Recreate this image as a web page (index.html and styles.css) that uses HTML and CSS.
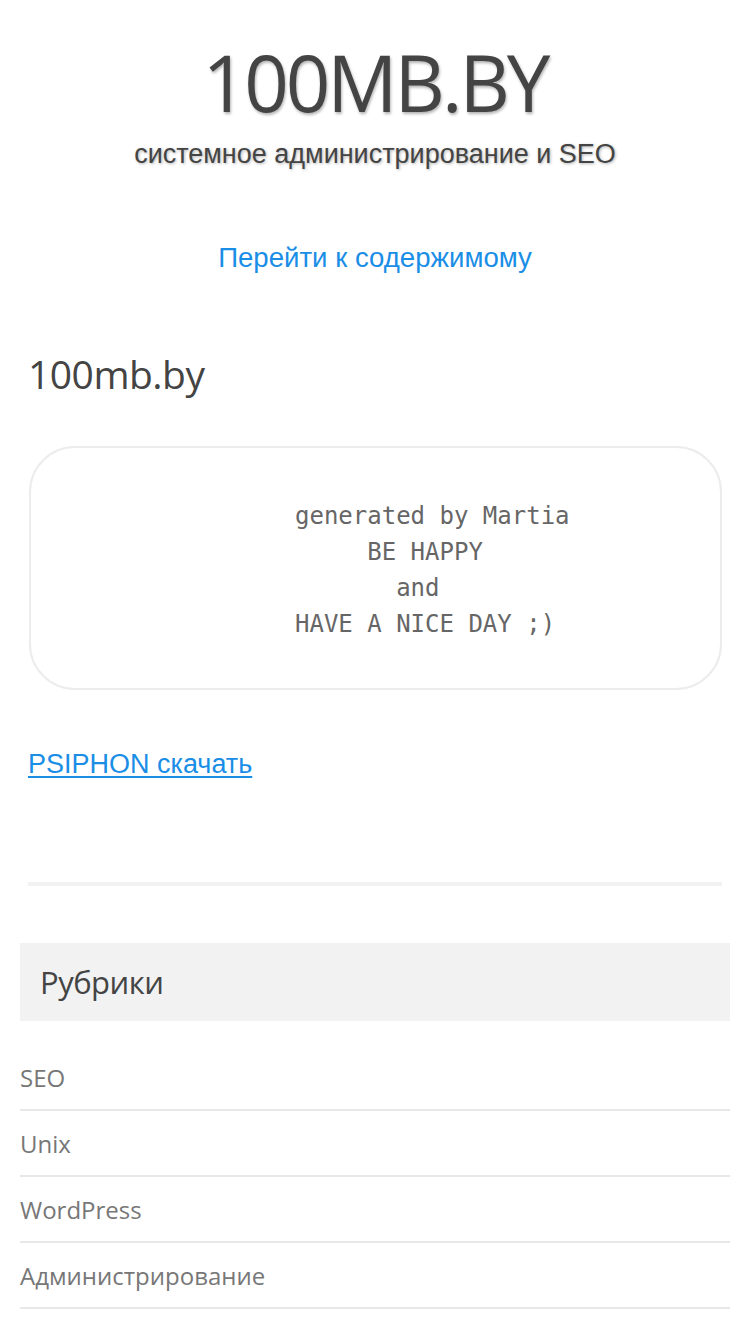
FILE: index.html
```html
<!DOCTYPE html>
<html lang="ru">
<head>
<meta charset="utf-8">
<title>100MB.BY</title>
<link rel="stylesheet" href="styles.css">
</head>
<body>
<header class="site-header">
  <h1 class="site-title">100MB.BY</h1>
  <p class="site-desc">системное администрирование и SEO</p>
  <a class="skip-link" href="#content">Перейти к содержимому</a>
</header>
<main class="content" id="content">
  <h2 class="page-title">100mb.by</h2>
  <div class="code-box"><pre class="code">generated by Martia
     BE HAPPY
       and
HAVE A NICE DAY ;)</pre></div>
  <a class="dl-link" href="#">PSIPHON скачать</a>
  <hr class="sep">
</main>
<aside class="widget">
  <h3 class="widget-title">Рубрики</h3>
  <ul class="cat-list">
    <li>SEO</li>
    <li>Unix</li>
    <li>WordPress</li>
    <li>Администрирование</li>
    <li>Разное</li>
  </ul>
</aside>
</body>
</html>
```
FILE: styles.css
```css
html, body {
  margin: 0;
  padding: 0;
  background: #fff;
}
body {
  font-family: "Liberation Sans", Arial, sans-serif;
  color: #444;
}
.site-header {
  display: flex;
  flex-direction: column;
  align-items: center;
  padding-top: 34px;
}
.site-title {
  margin: 0;
  font-family: "Open Sans", "Noto Sans", sans-serif;
  font-weight: 400;
  font-size: 78px;
  line-height: 96px;
  letter-spacing: -3px;
  color: #444;
  text-shadow: 1px 2px 3px rgba(0,0,0,0.3);
}
.site-desc {
  margin: 6px 0 0;
  font-size: 27px;
  line-height: 36px;
  color: #444;
  text-shadow: 1px 1px 3px rgba(0,0,0,0.3);
}
.skip-link {
  margin-top: 68px;
  font-size: 27.6px;
  line-height: 36px;
  color: #1a8ee6;
  text-decoration: none;
}
.content {
  padding: 0 28px;
  margin-top: 73px;
}
.page-title {
  margin: 0;
  font-family: "Open Sans", "Noto Sans", sans-serif;
  font-weight: 400;
  font-size: 39px;
  line-height: 50px;
  letter-spacing: -0.5px;
  color: #444;
}
.code-box {
  margin: 47px 0 0 1px;
  border: 2px solid #ececec;
  border-radius: 46px;
  height: 244px;
  box-sizing: border-box;
  display: flex;
  align-items: center;
}
.code {
  margin: 4px 0 0;
  padding-left: 264px;
  font-family: "DejaVu Sans Mono", monospace;
  font-size: 24px;
  line-height: 36px;
  color: #666;
}
.dl-link {
  display: inline-block;
  margin-top: 56px;
  font-size: 27px;
  line-height: 36px;
  color: #1a8ee6;
  text-decoration: underline;
  text-underline-offset: 3px;
  text-decoration-thickness: 2px;
}
.sep {
  margin: 100px 0 0;
  border: 0;
  height: 4px;
  background: #f2f2f2;
}
.widget {
  margin: 57px 20px 0;
}
.widget-title {
  margin: 0;
  background: #f2f2f2;
  height: 78px;
  display: flex;
  align-items: center;
  padding-left: 20px;
  font-family: "Open Sans", "Noto Sans", sans-serif;
  font-weight: 400;
  font-size: 31px;
  letter-spacing: -0.5px;
  color: #444;
}
.cat-list {
  list-style: none;
  margin: 24px 0 0;
  padding: 0;
}
.cat-list li {
  height: 64px;
  border-bottom: 2px solid #e8e8e8;
  display: flex;
  align-items: center;
  font-family: "Open Sans", "Noto Sans", sans-serif;
  font-size: 24px;
  letter-spacing: 0;
  color: #777;
}
```
